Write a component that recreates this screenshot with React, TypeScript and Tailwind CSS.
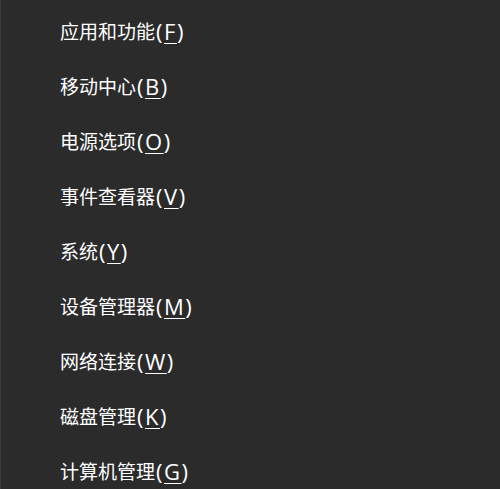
import React from 'react';

const items: { label: string; key: string }[] = [
  { label: '应用和功能', key: 'F' },
  { label: '移动中心', key: 'B' },
  { label: '电源选项', key: 'O' },
  { label: '事件查看器', key: 'V' },
  { label: '系统', key: 'Y' },
  { label: '设备管理器', key: 'M' },
  { label: '网络连接', key: 'W' },
  { label: '磁盘管理', key: 'K' },
  { label: '计算机管理', key: 'G' },
];

const App: React.FC = () => {
  return (
    <div
      className="w-[500px] h-[489px] overflow-hidden bg-[#2b2b2b] border-l border-[#3c3c3c] text-white flex flex-col pt-[3px]"
      style={{ fontFamily: '"Noto Sans CJK SC", "Noto Sans", sans-serif' }}
    >
      {items.map((item) => (
        <div key={item.key} className="h-[55px] shrink-0 flex items-center pl-[59px] text-[19px] leading-none">
          <span>{item.label}</span>
          <span
            className="text-[22px] tracking-[1.5px] ml-[1px]"
            style={{ fontFamily: '"Open Sans", "Noto Sans", sans-serif' }}
          >
            (<span className="underline underline-offset-[3px] decoration-1">{item.key}</span>)
          </span>
        </div>
      ))}
    </div>
  );
};

export default App;
